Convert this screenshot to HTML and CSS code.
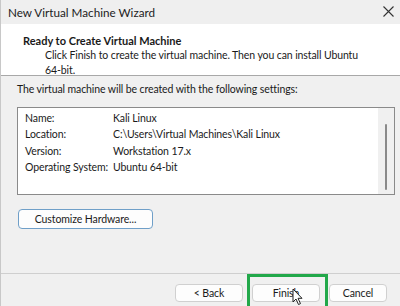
FILE: index.html
```html
<!DOCTYPE html>
<html lang="en">
<head>
    <meta charset="UTF-8">
    <title>New Virtual Machine Wizard</title>
    <link rel="stylesheet" href="styles.css">
</head>
<body>
    <div class="wizard">
        <!-- Window title bar -->
        <div class="titlebar">
            <span class="title">New Virtual Machine Wizard</span>
            <svg class="close" width="11" height="11" viewBox="0 0 11 11">
                <path d="M0.5 0.5 L10.5 10.5 M10.5 0.5 L0.5 10.5" stroke="#333" stroke-width="1.1" fill="none"/>
            </svg>
        </div>

        <!-- Page header -->
        <div class="header">
            <div class="header-title">Ready to Create Virtual Machine</div>
            <div class="header-sub">Click Finish to create the virtual machine. Then you can install Ubuntu<br>64-bit.</div>
        </div>

        <!-- Settings summary -->
        <div class="content">
            <div class="caption">The virtual machine will be created with the following settings:</div>
            <div class="listbox">
                <div class="rows">
                    <div class="row"><span class="label">Name:</span><span>Kali Linux</span></div>
                    <div class="row"><span class="label">Location:</span><span>C:\Users\Virtual Machines\Kali Linux</span></div>
                    <div class="row"><span class="label">Version:</span><span>Workstation 17.x</span></div>
                    <div class="row"><span class="label">Operating System:</span><span>Ubuntu 64-bit</span></div>
                </div>
                <div class="scrollbar"><div class="thumb"></div></div>
            </div>
            <button class="btn customize">Customize Hardware...</button>
        </div>

        <!-- Wizard buttons -->
        <div class="footer">
            <button class="btn back">&lt; Back</button>
            <button class="btn finish">Finish</button>
            <button class="btn cancel">Cancel</button>
            <div class="highlight"></div>
            <svg class="cursor" width="12" height="18" viewBox="0 0 12 18">
                <path d="M1 1 L1 14 L4 11 L6.5 16.5 L8.5 15.6 L6 10.3 L10 10.3 Z" fill="#fff" stroke="#222" stroke-width="1"/>
            </svg>
        </div>
    </div>
</body>
</html>
```

FILE: styles.css
```css
/* Basic page setup */
body {
    margin: 0;
    font-family: Lato, "Noto Sans", sans-serif;
    font-size: 10.5px;
    letter-spacing: -0.1px;
    color: #1a1a1a;
    background-color: #f0f0f0;
}

.wizard {
    width: 400px;
    height: 306px;
    display: flex;
    flex-direction: column;
    overflow: hidden;
    border-left: 1px solid #c8c8c8;
    box-sizing: border-box;
}

/* Title bar */
.titlebar {
    height: 24px;
    flex-shrink: 0;
    display: flex;
    align-items: center;
    justify-content: space-between;
    padding: 0 6px 0 7px;
    background-color: #efefef;
}
.title {
    font-size: 11.7px;
    letter-spacing: 0;
    color: #222;
}
.close {
    margin-top: -1px;
}

/* Header panel */
.header {
    height: 52px;
    flex-shrink: 0;
    box-sizing: border-box;
    padding: 9px 0 0 22px;
    background-color: #fff;
    border-bottom: 1px solid #a8a8a8;
}
.header-title {
    font-weight: bold;
    font-size: 11px;
    letter-spacing: 0;
    line-height: 15px;
}
.header-sub {
    padding-left: 22px;
    line-height: 14.5px;
}

/* Content area */
.content {
    flex: 1;
    padding: 6px 5px 0 16px;
}
.caption {
    line-height: 15px;
}
.listbox {
    margin-top: 10px;
    height: 88px;
    box-sizing: border-box;
    border: 1px solid #8a8a8a;
    background-color: #fff;
    display: flex;
    overflow: hidden;
}
.rows {
    flex: 1;
    padding: 2px 0 0 7px;
}
.row {
    display: flex;
    line-height: 16.3px;
    white-space: nowrap;
}
.label {
    width: 88px;
    flex-shrink: 0;
}
.scrollbar {
    width: 16px;
    background-color: #f0f0f0;
    padding-top: 16px;
    box-sizing: border-box;
}
.thumb {
    width: 2px;
    height: 66px;
    margin-left: 7px;
    background-color: #8a8a8a;
    border-radius: 1px;
}

/* Buttons */
.btn {
    font-family: inherit;
    font-size: 10.5px;
    letter-spacing: -0.1px;
    color: #1a1a1a;
    background-color: #fdfdfd;
    border: 1px solid #d0d0d0;
    border-radius: 4px;
    padding: 0;
    height: 18px;
    box-sizing: border-box;
}
.customize {
    margin-top: 14px;
    margin-left: 1px;
    width: 135px;
    height: 20px;
    border-color: #6f9fc8;
}

/* Footer */
.footer {
    position: relative;
    height: 33px;
    flex-shrink: 0;
    border-top: 1px solid #cfcfcf;
    display: flex;
    justify-content: flex-end;
    align-items: flex-start;
    padding: 10px 13px 0 0;
    box-sizing: border-box;
    gap: 9px;
}
.back, .finish {
    width: 68px;
}
.cancel {
    width: 58px;
}
.highlight {
    position: absolute;
    left: 246px;
    top: 0px;
    width: 75px;
    height: 40px;
    border: 3px solid #22a84a;
}
.cursor {
    position: absolute;
    left: 291px;
    top: 14px;
}
```
